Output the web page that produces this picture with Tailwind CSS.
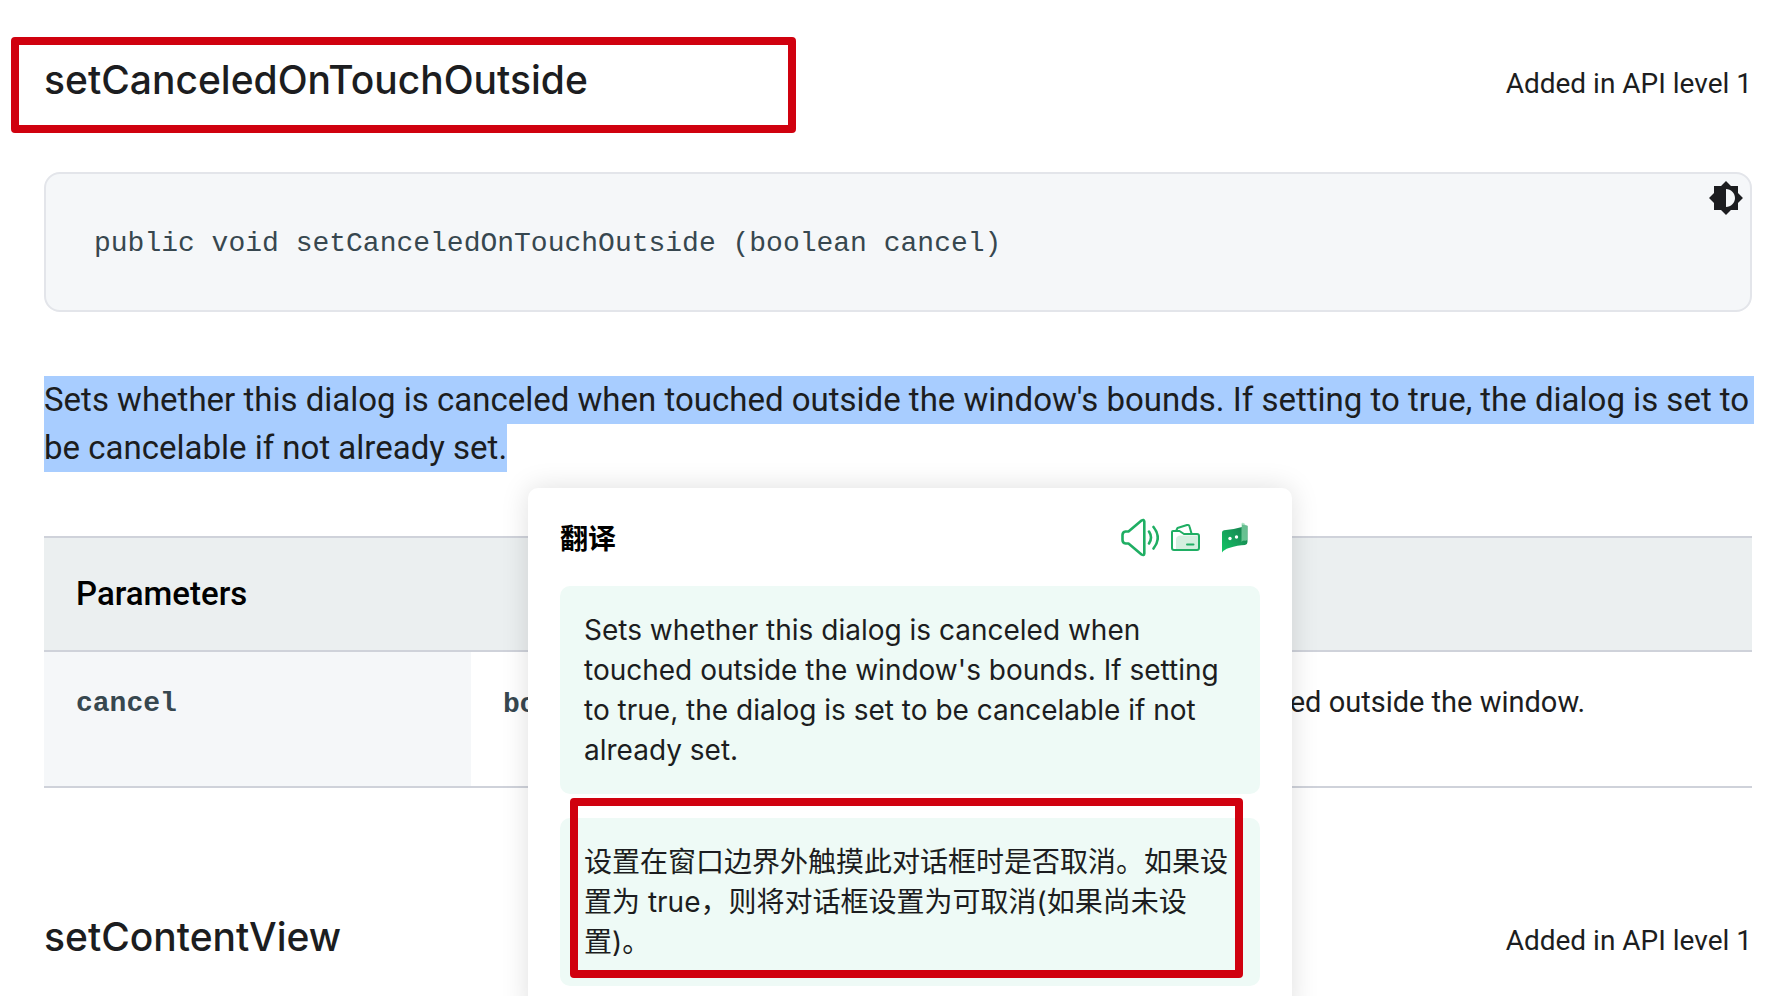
<!DOCTYPE html>
<html lang="en">
<head>
<meta charset="utf-8">
<meta name="viewport" content="width=device-width, initial-scale=1">
<title>Dialog | Android Developers</title>
<script src="https://cdn.jsdelivr.net/npm/@tailwindcss/browser@4"></script>
</head>
<body class="bg-white text-[#1c1d20] font-[Roboto,sans-serif]">
<main class="relative min-h-screen overflow-hidden pl-11 pr-10">

  <header class="flex items-center justify-between pt-14">
    <h3 class="font-[Inter,sans-serif] text-[39px] leading-[48px] font-medium">setCanceledOnTouchOutside</h3>
    <p class="pt-2 text-[28px] leading-10">Added in API level 1</p>
  </header>

  <section class="relative mt-[68px] rounded-2xl border-2 border-[#e3e5ea] bg-[#f5f7f9] px-12 pt-[50px] pb-[46px]">
    <pre class="font-['Liberation_Mono',monospace] text-[28px] leading-10 text-[#37474f]"><code>public void setCanceledOnTouchOutside (boolean cancel)</code></pre>
    <button type="button" aria-label="Toggle dark code theme" class="absolute top-1 right-1 flex size-10 items-center justify-center text-[#1c1d20]">
      <svg viewBox="0 0 24 24" class="size-9" fill="currentColor" aria-hidden="true"><path d="M20 15.31 23.31 12 20 8.69V4h-4.69L12 .69 8.69 4H4v4.69L.69 12 4 15.31V20h4.69L12 23.31 15.31 20H20v-4.69zM12 18V6c3.31 0 6 2.69 6 6s-2.69 6-6 6z"/></svg>
    </button>
  </section>

  <p class="mt-16 text-[33px] leading-[48px]"><span class="-mr-[2px] block bg-[#a8cdff]">Sets whether this dialog is canceled when touched outside the window's bounds. If setting to true, the dialog is set to</span><span class="inline-block bg-[#a8cdff]">be cancelable if not already set.</span></p>

  <table class="mt-16 w-full table-fixed border-collapse text-left">
    <colgroup><col class="w-1/4"><col class="w-3/4"></colgroup>
    <thead>
      <tr class="border-y-2 border-[#cfd2da] bg-[#ebeff0]">
        <th colspan="2" scope="colgroup" class="px-8 py-8 text-[33px] leading-[48px] font-medium text-black">Parameters</th>
      </tr>
    </thead>
    <tbody>
      <tr class="border-b-2 border-[#cfd2da] align-top leading-10">
        <td class="bg-[#f5f7f9] px-8 pt-8 pb-[61px] font-['Liberation_Mono',monospace] text-[28px] font-bold text-[#37474f]">cancel</td>
        <td class="px-8 pt-[30px] pb-[61px] text-[29px]"><code class="font-['Liberation_Mono',monospace] text-[28px] font-bold text-[#37474f]">boolean</code>: Whether the dialog should be canceled when touched outside the window.</td>
      </tr>
    </tbody>
  </table>

  <header class="flex items-center justify-between pt-[125px] pb-8">
    <h3 class="font-[Inter,sans-serif] text-[39px] leading-[48px] font-medium">setContentView</h3>
    <p class="pt-2 text-[28px] leading-10">Added in API level 1</p>
  </header>

  <!-- Translation popup floating over the page -->
  <aside class="absolute top-[488px] left-[528px] w-[764px] rounded-[10px] bg-white px-8 pt-7 pb-8 shadow-[0_0_28px_rgba(0,0,0,0.13)]">
    <div class="flex items-center justify-between pr-3">
      <h4 lang="zh-CN" class="font-['Noto_Sans_CJK_SC',sans-serif] text-[28px] leading-10 font-bold text-black">翻译</h4>
      <div class="flex items-center pt-[2px]">
        <button type="button" aria-label="Play" class="mr-3">
          <svg viewBox="0 0 38 40" class="h-10 w-[38px]" fill="none" stroke="#1fae63" stroke-width="2.6" stroke-linecap="round" stroke-linejoin="round" aria-hidden="true"><path d="M4.500 13.500H7.500L20.500 2.500Q23 1 23.300 3.500V35.500Q23 38 20.500 36.500L7.500 25.500H4.500Q1.500 25 1.500 22V17Q1.500 14 4.500 13.500Z"/><path d="M28 13.500Q32 19.500 28 25.500M32.500 9Q41 19.500 32.500 30.500"/></svg>
        </button>
        <button type="button" aria-label="Save" class="mr-[21px]">
          <svg viewBox="0 0 29 40" class="h-10 w-[29px]" fill="none" stroke="#1fae63" stroke-width="2" stroke-linecap="round" stroke-linejoin="round" aria-hidden="true"><path d="M5 32V22Q5 17.500 9.500 17.500H27V32Z" fill="#d3efdf" stroke="none"/><path d="M5.500 12 6.500 10 16 7Q18 6.500 18.500 8.500L20.500 15.500"/><path d="M2 13H8.500L13 16H26Q28 16 28 18V30Q28 32 26 32H3Q1 32 1 30V14Q1 13 2 13Z"/><path d="M16 26.500H22.500"/></svg>
        </button>
        <button type="button" aria-label="Feedback">
          <svg viewBox="0 0 27 40" class="h-10 w-[27px]" aria-hidden="true">
            <defs><linearGradient id="bubble" x1="0" y1="1" x2="1" y2="0"><stop offset="0" stop-color="#10c765"/><stop offset=".5" stop-color="#179e5a"/><stop offset="1" stop-color="#147a4b"/></linearGradient></defs>
            <path d="M1 14.500Q1 12.500 3 12.200Q13 11.500 21 9V6.500Q26 7.500 26.500 8V24Q26.500 26.500 24 27Q17 27 8 30Q3 31.500 1 34.500Z" fill="url(#bubble)"/>
            <path d="M20.500 6Q20.500 4.500 22 4.800Q24.500 5.500 24.500 7.500H26.500V21Q26 23.500 23 22.500Q21 22.500 20.500 24Z" fill="#8ad9ad" fill-opacity=".7"/>
            <circle cx="9" cy="20.500" r="1.700" fill="#fff"/><circle cx="15.500" cy="19" r="1.700" fill="#fff"/>
          </svg>
        </button>
      </div>
    </div>
    <p class="mt-7 rounded-[10px] bg-[#eefaf6] px-6 py-6 font-[Inter,sans-serif] text-[28px] leading-10 text-[#1c1d20]">Sets whether this dialog is canceled when touched outside the window's bounds. If setting to true, the dialog is set to be cancelable if not already set.</p>
    <p lang="zh-CN" class="mt-6 rounded-[10px] bg-[#eefaf6] px-6 py-6 font-[Inter,'Noto_Sans_CJK_SC',sans-serif] text-[28px] leading-10 text-[#1c1d20]">设置在窗口边界外触摸此对话框时是否取消。如果设置为 true，则将对话框设置为可取消(如果尚未设置)。</p>
    <!-- Marker around the translated text -->
    <div class="pointer-events-none absolute top-[310px] left-[42px] h-[180px] w-[673px] rounded-[4px] border-8 border-[#d0010f]"></div>
  </aside>

  <!-- Marker around the method name -->
  <div class="pointer-events-none absolute top-[37px] left-[11px] h-24 w-[785px] rounded-[4px] border-8 border-[#d0010f]"></div>
</main>
</body>
</html>
